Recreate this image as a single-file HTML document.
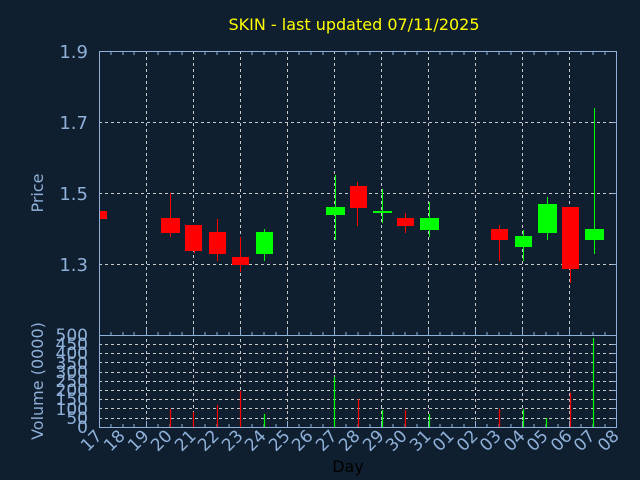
<!DOCTYPE html>
<html><head><meta charset="utf-8"><style>
html,body{margin:0;padding:0;background:#0f1f2f;}
svg{display:block;font-family:"DejaVu Sans","Liberation Sans",sans-serif;}
</style></head><body>
<svg width="640" height="480" viewBox="0 0 640 480" xmlns="http://www.w3.org/2000/svg">
<rect width="640" height="480" fill="#0f1f2f"/>
<text x="354" y="30" fill="#ffff00" font-size="16" text-anchor="middle">SKIN - last updated 07/11/2025</text>
<g stroke="#c8c8c8" stroke-width="1" stroke-dasharray="3,3" fill="none">
<path d="M99 122.5H617M99 193.5H617M99 264.5H617"/>
<path d="M146.5 51V427M193.5 51V427M240.5 51V427M287.5 51V427M334.5 51V427M381.5 51V427M428.5 51V427M475.5 51V427M522.5 51V427M569.5 51V427"/>
<path d="M99 344.5H617M99 353.5H617M99 362.5H617M99 372.5H617M99 381.5H617M99 390.5H617M99 399.5H617M99 408.5H617M99 418.5H617"/>
</g>
<g stroke="#8fb0d8" stroke-width="1" fill="none">
<rect x="99.5" y="51.5" width="517" height="376"/>
<path d="M99 335.5H617"/>
</g>
<g stroke="#8fb0d8" stroke-width="1">
<path d="M111 52v3M123 52v3M134 52v3M158 52v3M170 52v3M182 52v3M205 52v3M217 52v3M229 52v3M252 52v3M264 52v3M276 52v3M299 52v3M311 52v3M323 52v3M346 52v3M358 52v3M370 52v3M393 52v3M405 52v3M417 52v3M440 52v3M452 52v3M464 52v3M487 52v3M499 52v3M511 52v3M534 52v3M546 52v3M558 52v3M581 52v3M593 52v3M605 52v3"/>
<path d="M111 335v-3M123 335v-3M134 335v-3M158 335v-3M170 335v-3M182 335v-3M205 335v-3M217 335v-3M229 335v-3M252 335v-3M264 335v-3M276 335v-3M299 335v-3M311 335v-3M323 335v-3M346 335v-3M358 335v-3M370 335v-3M393 335v-3M405 335v-3M417 335v-3M440 335v-3M452 335v-3M464 335v-3M487 335v-3M499 335v-3M511 335v-3M534 335v-3M546 335v-3M558 335v-3M581 335v-3M593 335v-3M605 335v-3"/>
<path d="M111 427v-3M123 427v-3M134 427v-3M158 427v-3M170 427v-3M182 427v-3M205 427v-3M217 427v-3M229 427v-3M252 427v-3M264 427v-3M276 427v-3M299 427v-3M311 427v-3M323 427v-3M346 427v-3M358 427v-3M370 427v-3M393 427v-3M405 427v-3M417 427v-3M440 427v-3M452 427v-3M464 427v-3M487 427v-3M499 427v-3M511 427v-3M534 427v-3M546 427v-3M558 427v-3M581 427v-3M593 427v-3M605 427v-3"/>
<path d="M146.5 335v-6M193.5 335v-6M240.5 335v-6M287.5 335v-6M334.5 335v-6M381.5 335v-6M428.5 335v-6M475.5 335v-6M522.5 335v-6M569.5 335v-6M146.5 427v-6M193.5 427v-6M240.5 427v-6M287.5 427v-6M334.5 427v-6M381.5 427v-6M428.5 427v-6M475.5 427v-6M522.5 427v-6M569.5 427v-6"/>
<path d="M612 122.5h5M612 193.5h5M612 264.5h5M612 344.5h5M612 353.5h5M612 362.5h5M612 372.5h5M612 381.5h5M612 390.5h5M612 399.5h5M612 408.5h5M612 418.5h5"/>
</g>
<g fill="#8fb0d8" font-size="18" text-anchor="end">
<text x="88" y="58">1.9</text><text x="88" y="129">1.7</text><text x="88" y="200">1.5</text><text x="88" y="271">1.3</text>
</g>
<g fill="#8fb0d8" font-size="17" text-anchor="end">
<text x="88" y="341">500</text><text x="88" y="350">450</text><text x="88" y="359">400</text><text x="88" y="369">350</text><text x="88" y="378">300</text><text x="88" y="387">250</text><text x="88" y="396">200</text><text x="88" y="405">150</text><text x="88" y="415">100</text><text x="88" y="424">50</text><text x="88" y="433">0</text>
</g>
<text transform="translate(43,193) rotate(-90)" fill="#8fb0d8" font-size="16" text-anchor="middle">Price</text>
<text transform="translate(43,381) rotate(-90)" fill="#8fb0d8" font-size="16" text-anchor="middle">Volume (0000)</text>
<text x="348" y="472" fill="#000000" font-size="16" text-anchor="middle">Day</text>
<g fill="#8fb0d8" font-size="17" text-anchor="end">
<text transform="translate(103,437) rotate(-45)">17</text>
<text transform="translate(126,437) rotate(-45)">18</text>
<text transform="translate(150,437) rotate(-45)">19</text>
<text transform="translate(173,437) rotate(-45)">20</text>
<text transform="translate(197,437) rotate(-45)">21</text>
<text transform="translate(220,437) rotate(-45)">22</text>
<text transform="translate(244,437) rotate(-45)">23</text>
<text transform="translate(267,437) rotate(-45)">24</text>
<text transform="translate(291,437) rotate(-45)">25</text>
<text transform="translate(314,437) rotate(-45)">26</text>
<text transform="translate(338,437) rotate(-45)">27</text>
<text transform="translate(361,437) rotate(-45)">28</text>
<text transform="translate(385,437) rotate(-45)">29</text>
<text transform="translate(408,437) rotate(-45)">30</text>
<text transform="translate(432,437) rotate(-45)">31</text>
<text transform="translate(455,437) rotate(-45)">01</text>
<text transform="translate(479,437) rotate(-45)">02</text>
<text transform="translate(502,437) rotate(-45)">03</text>
<text transform="translate(526,437) rotate(-45)">04</text>
<text transform="translate(549,437) rotate(-45)">05</text>
<text transform="translate(573,437) rotate(-45)">06</text>
<text transform="translate(596,437) rotate(-45)">07</text>
<text transform="translate(620,437) rotate(-45)">08</text>
</g>
<g fill="#ff0000" stroke="#ff0000" stroke-width="1">
<rect x="100" y="211" width="7" height="8" stroke="none"/>
<path d="M170.5 193V237M194.5 225V253M217.5 219V261M240.5 237V272M357.5 182V226M405.5 213V233M499.5 225V261M570.5 207V283" fill="none"/>
<rect x="161" y="218" width="19" height="15" stroke="none"/>
<rect x="185" y="225" width="17" height="26" stroke="none"/>
<rect x="209" y="232" width="17" height="22" stroke="none"/>
<rect x="232" y="257" width="17" height="8" stroke="none"/>
<rect x="350" y="186" width="17" height="22" stroke="none"/>
<rect x="397" y="218" width="17" height="8" stroke="none"/>
<rect x="491" y="229" width="17" height="11" stroke="none"/>
<rect x="562" y="207" width="17" height="62" stroke="none"/>
<path d="M170.5 427V409M193.5 427V412M217.5 427V405M240.5 427V391M358.5 427V399M405.5 427V410M499.5 427V409M570.5 427V393" fill="none" stroke-width="1.2"/>
</g>
<g fill="#00ff00" stroke="#00ff00" stroke-width="1">
<path d="M264.5 229V261M335.5 175V240M382.5 189V223M429.5 202V237M523.5 230V261M547.5 197V240M594.5 108V254" fill="none"/>
<rect x="256" y="232" width="17" height="22" stroke="none"/>
<rect x="326" y="207" width="19" height="8" stroke="none"/>
<rect x="373" y="211" width="19" height="2" stroke="none"/>
<rect x="420" y="218" width="19" height="12" stroke="none"/>
<rect x="515" y="236" width="17" height="11" stroke="none"/>
<rect x="538" y="204" width="19" height="29" stroke="none"/>
<rect x="585" y="229" width="19" height="11" stroke="none"/>
<path d="M264.5 427V414M334.5 427V377M382.5 427V410M429.5 427V414M523.5 427V409M546.5 427V418M593.5 427V338" fill="none" stroke-width="1.2"/>
</g>
</svg>
</body></html>
